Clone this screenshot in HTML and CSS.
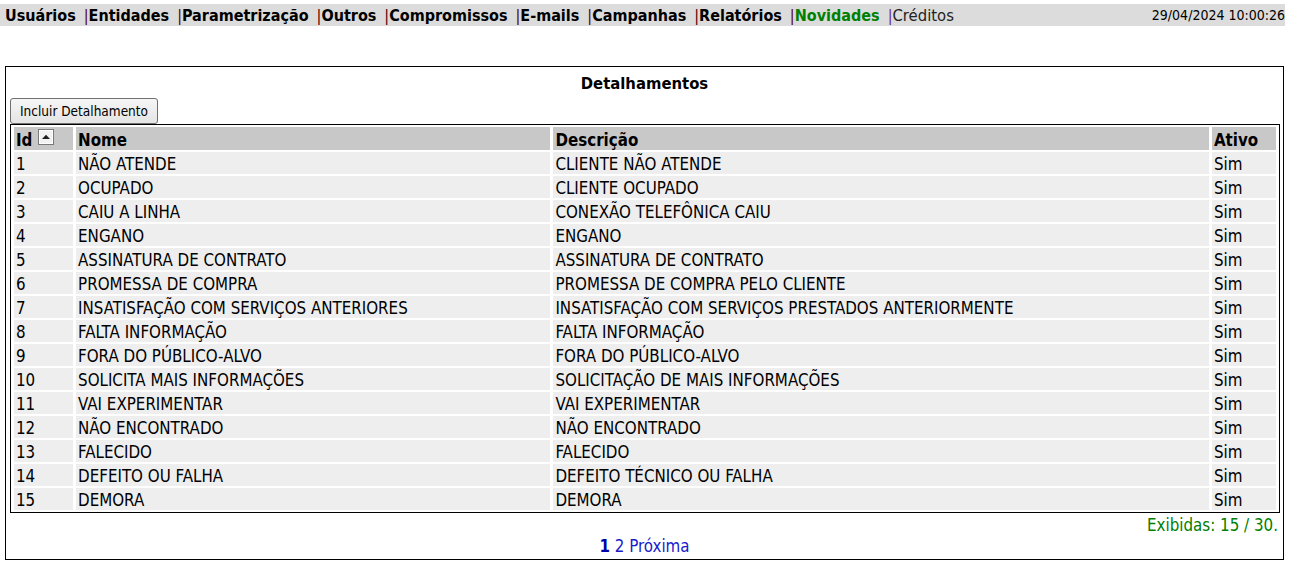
FILE: index.html
```html
<!DOCTYPE html>
<html lang="pt-BR">
<head>
<meta charset="utf-8">
<title>Detalhamentos</title>
<link rel="stylesheet" href="styles.css">
</head>
<body>
<div class="topbar">
  <nav class="menu">
    <a class="item">Usuários</a><span class="sep">|</span><a class="item">Entidades</a><span class="sep">|</span><a class="item">Parametrização</a><span class="sep">|</span><a class="item">Outros</a><span class="sep">|</span><a class="item">Compromissos</a><span class="sep">|</span><a class="item">E-mails</a><span class="sep">|</span><a class="item">Campanhas</a><span class="sep">|</span><a class="item">Relatórios</a><span class="sep">|</span><a class="item novidades">Novidades</a><span class="sep sep-alt">|</span><a class="item creditos">Créditos</a>
  </nav>
  <div class="clock">29/04/2024 10:00:26</div>
</div>

<div class="panel">
  <div class="panel-title">Detalhamentos</div>
  <div class="actions"><button class="btn" type="button">Incluir Detalhamento</button></div>
  <table class="grid">
    <colgroup>
      <col class="c-id"><col class="c-nome"><col class="c-desc"><col class="c-ativo">
    </colgroup>
    <thead>
      <tr><th class="th-id-cell"><span class="th-id"><span>Id</span><span class="sort"><svg class="sort-icon" width="16" height="16" viewBox="0 0 16 16"><rect x="0.5" y="0.5" width="15" height="15" fill="#f2f2f2" stroke="#7a7a7a"/><rect x="1.5" y="1.5" width="13" height="13" fill="none" stroke="#ffffff"/><path d="M4 10 L8 5.8 L12 10 Z" fill="#222"/></svg></span></span></th><th>Nome</th><th>Descrição</th><th>Ativo</th></tr>
    </thead>
    <tbody>
      <tr><td>1</td><td>NÃO ATENDE</td><td>CLIENTE NÃO ATENDE</td><td>Sim</td></tr>
      <tr><td>2</td><td>OCUPADO</td><td>CLIENTE OCUPADO</td><td>Sim</td></tr>
      <tr><td>3</td><td>CAIU A LINHA</td><td>CONEXÃO TELEFÔNICA CAIU</td><td>Sim</td></tr>
      <tr><td>4</td><td>ENGANO</td><td>ENGANO</td><td>Sim</td></tr>
      <tr><td>5</td><td>ASSINATURA DE CONTRATO</td><td>ASSINATURA DE CONTRATO</td><td>Sim</td></tr>
      <tr><td>6</td><td>PROMESSA DE COMPRA</td><td>PROMESSA DE COMPRA PELO CLIENTE</td><td>Sim</td></tr>
      <tr><td>7</td><td>INSATISFAÇÃO COM SERVIÇOS ANTERIORES</td><td>INSATISFAÇÃO COM SERVIÇOS PRESTADOS ANTERIORMENTE</td><td>Sim</td></tr>
      <tr><td>8</td><td>FALTA INFORMAÇÃO</td><td>FALTA INFORMAÇÃO</td><td>Sim</td></tr>
      <tr><td>9</td><td>FORA DO PÚBLICO-ALVO</td><td>FORA DO PÚBLICO-ALVO</td><td>Sim</td></tr>
      <tr><td>10</td><td>SOLICITA MAIS INFORMAÇÕES</td><td>SOLICITAÇÃO DE MAIS INFORMAÇÕES</td><td>Sim</td></tr>
      <tr><td>11</td><td>VAI EXPERIMENTAR</td><td>VAI EXPERIMENTAR</td><td>Sim</td></tr>
      <tr><td>12</td><td>NÃO ENCONTRADO</td><td>NÃO ENCONTRADO</td><td>Sim</td></tr>
      <tr><td>13</td><td>FALECIDO</td><td>FALECIDO</td><td>Sim</td></tr>
      <tr><td>14</td><td>DEFEITO OU FALHA</td><td>DEFEITO TÉCNICO OU FALHA</td><td>Sim</td></tr>
      <tr><td>15</td><td>DEMORA</td><td>DEMORA</td><td>Sim</td></tr>
    </tbody>
  </table>
  <div class="count">Exibidas: 15 / 30.</div>
  <div class="pager"><b class="cur">1</b> <a class="pg">2</a> <a class="pg">Próxima</a></div>
</div>
</body>
</html>
```

FILE: styles.css
```css
html, body {
  margin: 0;
  padding: 0;
  background: #ffffff;
}
body {
  font-family: "DejaVu Sans Condensed", "DejaVu Sans", sans-serif;
  font-stretch: condensed;
  font-size: 16px;
  color: #000;
}
.topbar {
  margin-top: 4px;
  width: 1285px;
  height: 22px;
  background: #dcdcdc;
  display: flex;
  align-items: center;
  justify-content: space-between;
}
.menu {
  padding-left: 5px;
  font-weight: bold;
  font-size: 16px;
  white-space: nowrap;
}
.item { color: #000; text-decoration: none; }
.sep { color: #5a0000; font-weight: normal; padding-left: 8px; }
.sep-alt { color: #6a2a8a; }
.novidades { color: #008000; }
.creditos { font-weight: normal; color: #222; font-size: 16.5px; }
.clock {
  font-size: 14px;
  color: #000;
}
.panel {
  margin: 40px 0 0 5px;
  width: 1277px;
  border: 1px solid #000;
}
.panel-title {
  text-align: center;
  font-weight: bold;
  font-size: 16.5px;
  height: 31px;
  line-height: 33px;
}
.actions {
  padding-left: 4px;
}
.btn {
  font-family: inherit;
  font-stretch: condensed;
  font-size: 13.5px;
  height: 26px;
  width: 148px;
  padding: 0;
  border: 1px solid #707070;
  border-radius: 3px;
  background: linear-gradient(#f6f6f6, #e4e4e4);
  color: #000;
  display: block;
}
.grid {
  margin: 0 0 0 4px;
  width: 1270px;
  border: 1px solid #000;
  border-spacing: 3px 2px;
  table-layout: fixed;
}
.c-id { width: 59px; }
.c-nome { width: 474px; }
.c-desc { width: 655px; }
.c-ativo { width: 64px; }
.grid th, .grid td {
  text-align: left;
  padding: 1px 2px 0 2px;
  height: 21px;
  font-size: 16.8px;
  white-space: nowrap;
}
.grid th {
  background: #c8c8c8;
  font-weight: bold;
  padding-top: 3px;
  height: 19px;
}
.grid td {
  background: #eeeeee;
}
.th-id-cell { vertical-align: top; }
.th-id { display: flex; align-items: flex-start; gap: 6px; }
.sort { display: block; flex: none; width: 16px; height: 16px; margin-top: -1px; }
.sort-icon { display: block; }
.count {
  text-align: right;
  color: #008000;
  font-size: 16.8px;
  padding: 2px 5px 0 0;
  height: 21px;
}
.pager {
  text-align: center;
  font-size: 16.8px;
  height: 23px;
}
.cur { color: #0000aa; }
.pg { color: #1a1acc; text-decoration: none; }
```
